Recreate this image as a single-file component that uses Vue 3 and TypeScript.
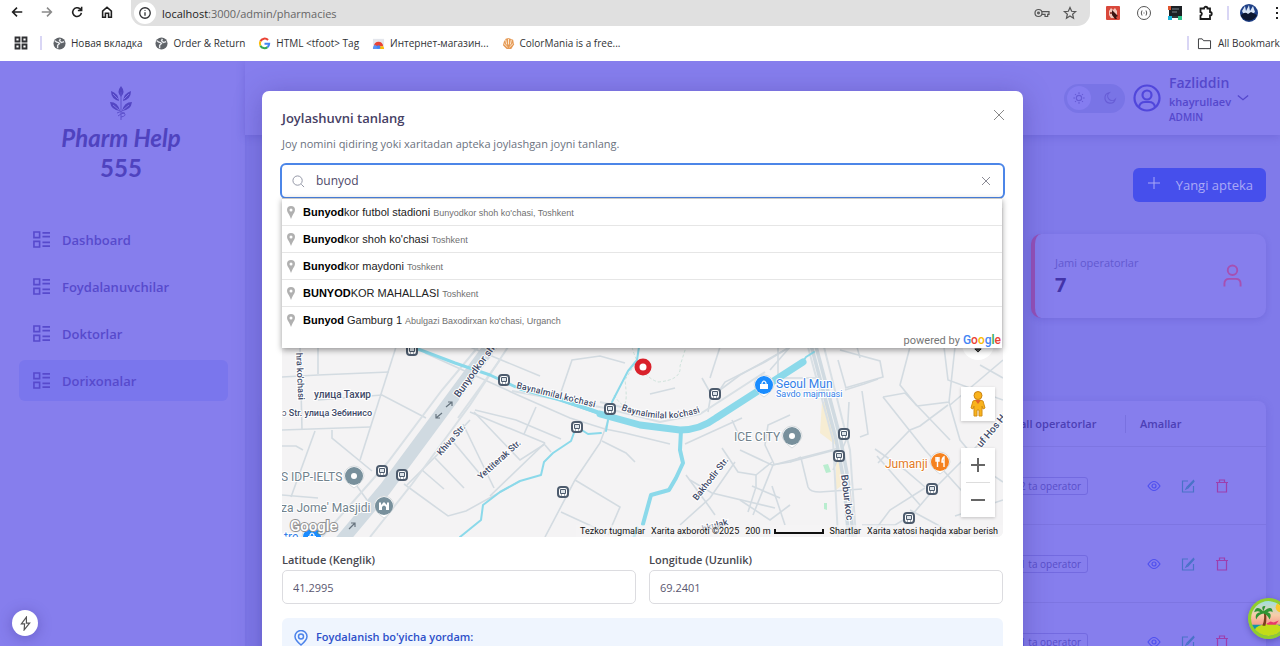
<script setup lang="ts">
import { ref } from 'vue'

interface Bookmark { label: string; icon: 'globe' | 'google' | 'store' | 'mania' }
interface Suggestion { match: string; rest: string; area: string }
interface Poi { x: number; y: number; color: string; kind: 'dot' | 'mosque' | 'bag' | 'food' }

const bookmarks: Bookmark[] = [
  { label: 'Новая вкладка', icon: 'globe' },
  { label: 'Order & Return', icon: 'globe' },
  { label: 'HTML <tfoot> Tag', icon: 'google' },
  { label: 'Интернет-магазин...', icon: 'store' },
  { label: 'ColorMania is a free...', icon: 'mania' },
]
const menu = ['Dashboard', 'Foydalanuvchilar', 'Doktorlar', 'Dorixonalar']
const active = ref('Dorixonalar')
const operators = [2, 1, 1]
const query = ref('bunyod')
const latitude = ref('41.2995')
const longitude = ref('69.2401')

const suggestions: Suggestion[] = [
  { match: 'Bunyod', rest: 'kor futbol stadioni', area: "Bunyodkor shoh ko'chasi, Toshkent" },
  { match: 'Bunyod', rest: "kor shoh ko'chasi", area: 'Toshkent' },
  { match: 'Bunyod', rest: 'kor maydoni', area: 'Toshkent' },
  { match: 'BUNYOD', rest: 'KOR MAHALLASI', area: 'Toshkent' },
  { match: 'Bunyod', rest: ' Gamburg 1', area: "Abulgazi Baxodirxan ko'chasi, Urganch" },
]

const stops: [number, number][] = [
  [412, 350], [504, 380], [382, 471], [402, 475], [577, 427], [610, 409],
  [715, 394], [563, 492], [844, 434], [839, 456], [932, 489], [909, 518],
]
const pois: Poi[] = [
  { x: 354, y: 476, color: '#78909c', kind: 'dot' },
  { x: 384, y: 506, color: '#78909c', kind: 'mosque' },
  { x: 792, y: 436, color: '#78909c', kind: 'dot' },
  { x: 764, y: 385, color: '#1a8cff', kind: 'bag' },
  { x: 312, y: 537, color: '#1a8cff', kind: 'bag' },
  { x: 940, y: 462, color: '#f58220', kind: 'food' },
]
const roads = [
  'M282 377L318 375L389 372', 'M318 347V374', 'M300 347L302 430', 'M282 430L370 427', 'M396 347L360 460',
  'M318 400L382 395L426 418', 'M332 430V438L372 471', 'M315 431L291 497', 'M282 446L296 446L303 450',
  'M282 495L318 498', 'M349 475L367 500', 'M404 484L448 516L466 511L520 481',
  'M407 485L437 455L470 420', 'M422 470L444 489', 'M435 458L464 488', 'M450 438L480 474', 'M463 424L494 488',
  'M470 412L545 443', 'M474 412L520 460L545 444', 'M425 353L520 396L570 418L605 429L625 433L670 444', 'M470 347L540 376',
  'M475 410L516 420L561 439', 'M536 407L524 434', 'M545 443L490 496', 'M608 421L600 443L575 480L545 537',
  'M602 441L626 453L635 462', 'M575 480L620 507L608 535', 'M561 512L600 530', 'M545 445L551 452',
  'M560 395L572 360L600 356L625 363', 'M650 394L675 388', 'M685 444L742 418', 'M732 420L741 440', 'M717 394L725 382L765 362L790 347',
  'M702 378L711 394L708 412', 'M710 378L720 347', 'M790 347L740 375L720 390',
  'M680 525L710 498L735 462', 'M686 475L708 505L715 515', 'M690 480L712 493L775 508', 'M740 450L772 465L790 462L835 450',
  'M722 448L738 472L756 475V487L748 512', 'M773 465L753 515', 'M752 486L780 498', 'M756 475L772 462', 'M740 500L770 520L790 505', 'M772 486L785 525',
  'M774 464L765 445L768 425L790 415', 'M801 458L808 487Q810 492 820 492L862 489', 'M773 465L843 447', 'M790 462L801 457',
  'M778 347V378L818 378', 'M790 347L770 370', 'M840 350L880 361L883 377L845 388', 'M860 358L857 347', 'M846 388L838 360',
  'M849 402L847 438L833 470', 'M845 390L864 384L878 379', 'M862 391L868 434L860 437', 'M883 397L905 393L950 440',
  'M883 397L925 450L970 500', 'M878 463L910 430L920 426L948 405', 'M875 449L905 470L925 487', 'M877 456L920 505',
  'M917 406L949 402L955 347', 'M949 402L960 440L985 470L1003 482', 'M917 406L900 385L910 347', 'M950 405L1003 360', 'M944 347L948 380L1003 400',
  'M862 525H895L912 515L935 488L968 455L1003 420', 'M875 530L890 510L925 488', 'M980 365L1003 378', 'M910 510L960 537', 'M955 516L1003 500',
]
const lanes = [
  'M322 537L388 462L442 390L478 347', 'M370 537L412 484L470 405L508 347', 'M458 418L500 360',
  'M808 347L833 440L838 537', 'M824 347L850 450L856 537', 'M512 391L605 408L660 422L700 414L765 372', 'M600 402L660 416',
]
</script>

<template>
  <div class="window">
    <header class="chrome">
      <div class="toolbar">
        <nav class="nav-buttons" aria-label="Browser">
          <button aria-label="Back"><svg viewBox="0 0 16 16"><path d="M14 8H3M8 3L3 8l5 5" /></svg></button>
          <button aria-label="Forward" class="dim"><svg viewBox="0 0 16 16"><path d="M2 8h11M8 3l5 5-5 5" /></svg></button>
          <button aria-label="Reload"><svg viewBox="0 0 16 16"><path d="M13 9A5 5 0 1 1 11.500 4.500L13 6M13.300 2v4.300H9" /></svg></button>
          <button aria-label="Home"><svg viewBox="0 0 16 16"><path d="M3 7l5-4.500L13 7v7H9.800V9.500H6.200V14H3z" /></svg></button>
        </nav>
        <div class="address">
          <span class="info"><svg viewBox="0 0 16 16"><circle cx="8" cy="8" r="6" /><path d="M8 7.200V11M8 4.800v1" /></svg></span>
          <span class="url"><b>localhost</b>:3000/admin/pharmacies</span>
          <svg class="a-icon" viewBox="0 0 18 16"><circle cx="5" cy="8" r="4" /><circle cx="5" cy="8" r="1" /><path d="M9 6.500h8v3h-1.500V12h-3V9.500H9" /></svg>
          <svg class="a-icon" viewBox="0 0 16 16"><path d="M8 1.800l1.900 4.200 4.500.4-3.400 3 1 4.500L8 11.500l-4 2.400 1-4.500-3.400-3L6.100 6z" /></svg>
        </div>
        <div class="extensions">
          <svg viewBox="0 0 16 16"><rect x="1" y="1" width="14" height="14" rx="1" fill="#d9483b" /><path d="M4 6l2-3 2 2 2-2 2 3v4l-3 3H6l-2-3z" fill="#f2c7bd" /><path d="M7 5l6 6-2 1 1 2-2 0-3-4z" fill="#3a1512" /><circle cx="6" cy="8" r="1" fill="#7b201a" /></svg>
          <svg viewBox="0 0 16 16" class="outlined"><circle cx="8" cy="8" r="6.500" /><path d="M6 5.500q-1.500 2.500 0 5M10 5.500q1.500 2.500 0 5M7.500 8h1" /></svg>
          <svg viewBox="0 0 16 16"><rect x="2" y="1" width="13" height="10" fill="#1c2024" /><path d="M1 1h3v4H1z" fill="#e0552e" /><path d="M1 11h4v4H1z" fill="#19b5dc" /><path d="M11 11h4v4h-4z" fill="#2bc48a" /><path d="M5 4h7M5 7h5" stroke="#7c858c" /><path d="M5 11h6v2H5z" fill="#30363b" /></svg>
          <svg viewBox="0 0 16 16" class="outlined bold"><path d="M2.500 3.500H6a1.700 1.700 0 0 1 3.500 0H12V7a1.700 1.700 0 0 1 0 3.500V14H2.500v-3.500a1.800 1.800 0 0 0 0-3.500z" /></svg>
          <i class="bar"></i>
          <svg class="user" viewBox="0 0 18 18"><circle cx="9" cy="9" r="9" fill="#1e3f86" /><path d="M2 7l3-5 1 5 3-6 1 6 3-5 2 6-4 3H4z" fill="#d7e4f5" /><path d="M1 11q4-4 7-1l3-2 6 3a9 9 0 0 1-16 1z" fill="#0d1730" /></svg>
          <button class="kebab" aria-label="Menu"><svg viewBox="0 0 4 16"><path d="M1 2h2v2H1zM1 7h2v2H1zM1 12h2v2H1z" fill="#222" /></svg></button>
        </div>
      </div>
      <div class="bookmarks">
        <svg class="apps" viewBox="0 0 14 14"><path d="M1.500 1.500h4v4h-4zM8.500 1.500h4v4h-4zM1.500 8.500h4v4h-4zM8.500 8.500h4v4h-4z" /></svg>
        <i class="bar"></i>
        <a v-for="b in bookmarks" :key="b.label" href="#">
          <svg v-if="b.icon === 'globe'" viewBox="0 0 14 14"><circle cx="7" cy="7" r="6.500" fill="#5f6368" /><path d="M2 4q2 2 4 2l1 1-2 2v3M8 2l-1 2 2 2 3-1" stroke="#e8eaed" stroke-width="1.500" /></svg>
          <svg v-else-if="b.icon === 'google'" viewBox="0 0 14 14" stroke-width="2.200"><path d="M10.800 3.300A5 5 0 0 0 2.600 4.600" stroke="#ea4335" /><path d="M2.600 4.600a5 5 0 0 0 0 4.800" stroke="#fbbc05" /><path d="M2.600 9.400a5 5 0 0 0 7.600 1.500" stroke="#34a853" /><path d="M10.200 10.900A5 5 0 0 0 12 7.200H7" stroke="#4285f4" /></svg>
          <svg v-else-if="b.icon === 'store'" viewBox="0 0 14 14"><path d="M1 2h12v11H1z" fill="#e4e6ec" /><path d="M2 10a5 5 0 0 1 10 0H7z" fill="#ea4335" /><path d="M1 13q0-3 2-5l4 3-1 2z" fill="#5b95f5" /><path d="M8 13h5q0-2-1-3H7z" fill="#fbbc05" /><circle cx="7" cy="11" r="2" fill="#4285f4" /></svg>
          <svg v-else viewBox="0 0 14 14"><path d="M2 5l2-3 3-1 5 2 1 5-3 5H5L1 9z" fill="#e59a56" /><path d="M4 3l1 5M7 2v6M10 3L9 8M2 7l4 4M12 7l-4 4" stroke="#fff0dc" /></svg>
          <span>{{ b.label }}</span>
        </a>
        <div class="all"><i class="bar"></i><svg viewBox="0 0 16 14"><path d="M1.500 2h4l1.500 2h7.500v8.500h-13z" /></svg><span>All Bookmarks</span></div>
      </div>
    </header>

    <div class="app">
      <aside class="sidebar">
        <div class="brand">
          <svg viewBox="0 0 26 36"><path d="M13 1q-5 6 0 11q5-5 0-11zM3 6q0 8 8 10Q10 8 3 6zM23 6q0 8-8 10Q16 8 23 6zM2 17q1 8 10 9Q10 17 2 17zM24 17q-1 8-10 9Q16 17 24 17z" /><path class="line" d="M13 7v28M9 28q4-3 7 0t-3 4M17 28q-4 0-7 3" /><path class="vein" d="M5 9l5 5M21 9l-5 5M5 20l6 5M21 20l-6 5" /></svg>
          <p><em>Pharm Help</em><br />555</p>
        </div>
        <nav>
          <a v-for="m in menu" :key="m" href="#" :class="{ active: m === active }" @click.prevent="active = m">
            <svg viewBox="0 0 18 18"><path d="M1 1h6v6H1zM1 11h6v6H1zM10 2h8M10 6h8M10 12h8M10 16h8" /></svg>{{ m }}
          </a>
        </nav>
      </aside>
      <main>
        <div class="topbar">
          <button class="theme" aria-label="Theme">
            <span><svg viewBox="0 0 16 16"><circle cx="8" cy="8" r="3" /><path d="M8 1.500v2M8 12.500v2M1.500 8h2M12.500 8h2M3.500 3.500l1 1M11.500 11.500l1 1M12.500 3.500l-1 1M4.500 11.500l-1 1" /></svg></span>
            <svg viewBox="0 0 16 16"><path d="M7 2a6 6 0 1 0 7 7.500A5 5 0 0 1 7 2z" /></svg>
          </button>
          <svg class="avatar" viewBox="0 0 28 28"><circle cx="14" cy="14" r="12.500" /><circle cx="14" cy="11" r="4.500" /><path d="M6 23q1-5 6-5h4q5 0 6 5" /></svg>
          <div class="who"><strong>Fazliddin</strong><b>khayrullaev</b><small>ADMIN</small></div>
          <svg class="chev" viewBox="0 0 14 8"><path d="M1 1l6 5 6-5" /></svg>
        </div>
        <div class="content">
          <button class="add"><svg viewBox="0 0 12 12"><path d="M6 0v12M0 6h12" /></svg>Yangi apteka</button>
          <section class="stat">
            <div><span>Jami operatorlar</span><strong>7</strong></div>
            <svg viewBox="0 0 20 24"><circle cx="10" cy="6" r="5" /><path d="M1.500 23v-3q0-5 5-5h7q5 0 5 5v3" /></svg>
          </section>
          <table>
            <thead><tr><th></th><th class="ops">Call operatorlar</th><th class="acts">Amallar</th></tr></thead>
            <tbody>
              <tr v-for="(n, i) in operators" :key="i">
                <td></td>
                <td><span class="tag">{{ n }} ta operator</span></td>
                <td>
                  <div class="actions">
                    <button class="view" aria-label="View"><svg viewBox="0 0 14 14"><path d="M1 7q6-9 12 0q-6 9-12 0z" /><circle cx="7" cy="7" r="2" /></svg></button>
                    <button class="edit" aria-label="Edit"><svg viewBox="0 0 14 14"><path d="M7 2H1.500v11h11V7M12.500 1.500L6 8l-1 2 2-1 6-6.500z" /></svg></button>
                    <button class="del" aria-label="Delete"><svg viewBox="0 0 14 14"><path d="M1 3.500h12M4.500 3.500V1h5v2.500M2.500 3.500v9.500h9V3.500" /></svg></button>
                  </div>
                </td>
              </tr>
            </tbody>
          </table>
        </div>
      </main>

      <div class="backdrop">
        <div class="modal" role="dialog" aria-labelledby="dialog-title">
          <button class="close" aria-label="Close"><svg viewBox="0 0 12 12"><path d="M1 1l10 10M11 1L1 11" /></svg></button>
          <h2 id="dialog-title">Joylashuvni tanlang</h2>
          <p class="hint">Joy nomini qidiring yoki xaritadan apteka joylashgan joyni tanlang.</p>
          <div class="search">
            <svg viewBox="0 0 14 14"><circle cx="6" cy="6" r="5" /><path d="M10 10l3 3" /></svg>
            <input v-model="query" type="text" aria-label="Joy nomi" />
            <button aria-label="Clear" @click="query = ''"><svg viewBox="0 0 12 12"><path d="M2 2l8 8M10 2l-8 8" /></svg></button>
            <div class="results">
              <ul>
                <li v-for="s in suggestions" :key="s.rest">
                  <svg viewBox="0 0 8 13"><path d="M4 0a4 4 0 0 1 4 4Q8 6 6 8.500Q5 10 4 13Q3 10 2 8.500Q0 6 0 4a4 4 0 0 1 4-4z" /><circle cx="4" cy="4" r="1.500" /></svg>
                  <span class="place"><b>{{ s.match }}</b>{{ s.rest }}</span> <span class="area">{{ s.area }}</span>
                </li>
              </ul>
              <div class="powered">powered by <span class="google"><i class="b">G</i><i class="r">o</i><i class="y">o</i><i class="b">g</i><i class="g">l</i><i class="r">e</i></span></div>
            </div>
          </div>

          <div class="map">
            <svg class="canvas" viewBox="282 208 721 329" preserveAspectRatio="xMidYMax slice" role="img" aria-label="Xarita">
              <defs>
                <path id="street-a" d="M516 388L597 408" />
                <path id="street-b" d="M621 410Q668 427 708 409" />
              </defs>
              <rect x="0" y="0" width="1400" height="540" fill="#f4f3f4" />
              <path d="M822 402l10 0 8 30 6 50-10 8V445l-16-12z" fill="#f7edd3" />
              <path d="M823 465l5-1 3 8-5 1zM824 503l3 0 0 7-3-1z" fill="#b9edcf" />
              <g class="roads"><path v-for="d in roads" :key="d" :d="d" /></g>
              <g class="paths"><path d="M632 347Q640 376 658 382Q682 380 680 366L686 347M614 395Q630 420 625 380L636 362" /></g>
              <g class="lanes"><path v-for="d in lanes" :key="d" :d="d" /></g>
              <path class="avenue" d="M338 545L385 489L442 412L495 340" />
              <path class="avenue mid" d="M812 340L838 438L846 480L851 540" />
              <path class="road-gap" d="M812 340L838 438L846 480L851 540" />
              <g class="water">
                <path d="M410 346L455 363L490 375L520 389L560 400L605 415" stroke-width="3" />
                <path d="M560 399L605 415" stroke-width="4" />
                <path d="M600 414L640 425L680 430Q700 430 716 418L772 382L803 362" stroke-width="7" />
                <path d="M802 363L806 357L814 352" stroke-width="2" />
                <path d="M639 347L637 360L628 371L612 402" stroke-width="2" />
                <path d="M577 427L588 434L601 433M608 420L606 431" stroke-width="2" />
                <path d="M575 430L571 441L553 453L544 462L541 475L520 481L500 492L483 505L481 520L460 537" stroke-width="2" />
                <path d="M681 430L680 450L683 463L676 478L669 490L651 495L643 524" stroke-width="4" />
                <path d="M637 528L634 537" stroke-width="3" />
              </g>
              <g class="arrows"><path d="M436 418l6-5m-6 1v4h4M446 407l6-5m-4 0h4v4M349 529l6-6m-4 0h4v4" /></g>
              <g class="labels">
                <text transform="translate(296 353) rotate(87)">hra ko'chasi</text>
                <text class="wide" x="314" y="398">улица Тахир</text>
                <text x="282" y="416">ɔ Str. улица Зебинисо</text>
                <text class="wide" transform="translate(459 398) rotate(-54)">Bunyodkor shoh</text>
                <text transform="translate(441 456) rotate(-49)">Khiva Str.</text>
                <text transform="translate(481 480) rotate(-42)">Yettiterak Str.</text>
                <text><textPath href="#street-a">Baynalmilal ko'chasi</textPath></text>
                <text><textPath href="#street-b">Baynalmilal ko'chasi</textPath></text>
                <text transform="translate(697 501) rotate(-52)">Bakhodir Str.</text>
                <text transform="translate(703 532) rotate(-16)">hkulak</text>
                <text class="wide" transform="translate(841 475) rotate(83)">Bobur ko'c</text>
                <text class="wide" transform="translate(981 448) rotate(-50)">uf Hos Hojib</text>
              </g>
              <g v-for="(s, i) in stops" :key="i" :transform="`translate(${s[0]} ${s[1]})`">
                <rect x="-5" y="-5" width="10" height="10" rx="3" fill="#fff" stroke="#4d5b6d" stroke-width="2" />
                <path d="M-2.500-2.500h5v4h-5zM-2 3h1M1 3h1" fill="#dfe5ea" stroke="#4d5b6d" />
              </g>
              <g v-for="(p, i) in pois" :key="'p' + i" :transform="`translate(${p.x} ${p.y})`">
                <path d="M-10 0a10 10 0 1 1 20 0Q9 6 0 12Q-9 6-10 0z" fill="#fff" stroke="#d8dcdf" />
                <circle r="9" :fill="p.color" />
                <circle v-if="p.kind === 'dot'" r="3" fill="#fff" />
                <path v-else-if="p.kind === 'mosque'" d="M-5 4v-7l1-1 1 1v2l3-3 3 3v-2l1-1 1 1v7H2V1q-2-3-4 0v3z" fill="#fff" />
                <g v-else-if="p.kind === 'bag'"><path d="M-4-1h8v5h-8z" fill="#fff" /><path d="M-2-1v-1q2-4 4 0v1" stroke="#fff" stroke-width="1.200" fill="none" /></g>
                <path v-else d="M-4-5v4h3v-4M-2.500-5v10M4 5v-10q-2 1-2 5h2" stroke="#fff" stroke-width="1.400" fill="none" />
              </g>
              <g class="places">
                <text x="281" y="481">S IDP-IELTS</text>
                <text x="281" y="512">za Jome' Masjidi</text>
                <text x="734" y="441">ICE CITY</text>
                <text class="blue" x="776" y="388">Seoul Mun</text>
                <text class="blue small" x="776" y="397">Savdo majmuasi</text>
                <text class="blue" x="284" y="541">tre</text>
                <text class="orange" x="885" y="468">Jumanji</text>
              </g>
              <circle cx="643" cy="367" r="6" fill="#fff" stroke="#d9212b" stroke-width="5" />
              <g class="watermark"><text x="290" y="531">Google</text></g>
            </svg>
            <button class="compass" aria-label="Compass"><svg viewBox="0 0 10 6"><path d="M1 1l4 4 4-4z" /></svg></button>
            <div class="controls">
              <button class="pegman" aria-label="Street View"><svg viewBox="0 0 16 26"><circle cx="8" cy="4.500" r="4" fill="#f9b31c" stroke="#c98213" /><path d="M3 10q5-3 10 0l2 7-2 1-1-3v10H9v-6H7v6H4V15l-1 3-2-1z" fill="#f9b31c" stroke="#d28e18" /><path d="M5 9l3 4 3-4z" fill="#e2632a" stroke="none" /></svg></button>
              <div class="zoom"><button aria-label="Zoom in"><svg viewBox="0 0 14 14"><path d="M0 7h14M7 0v14" /></svg></button><i></i><button aria-label="Zoom out"><svg viewBox="0 0 14 14"><path d="M0 7h14" /></svg></button></div>
            </div>
            <div class="legal"><span>Tezkor tugmalar</span><span>Xarita axboroti ©2025</span><span class="scale">200 m<i></i></span><a href="#">Shartlar</a><a href="#">Xarita xatosi haqida xabar berish</a></div>
          </div>

          <div class="fields">
            <label>Latitude (Kenglik)<input v-model="latitude" type="text" /></label>
            <label>Longitude (Uzunlik)<input v-model="longitude" type="text" /></label>
          </div>
          <div class="help">
            <svg viewBox="0 0 14 16"><path d="M7 15Q1 10 1 6.500a6 6 0 0 1 12 0Q13 10 7 15z" /><circle cx="7" cy="6.500" r="2.500" /></svg>
            <strong>Foydalanish bo'yicha yordam:</strong>
          </div>
        </div>
      </div>

      <button class="bolt" aria-label="Tools"><svg viewBox="0 0 12 16"><path d="M7 1L1.500 8.500H5L4.500 15L10.500 7.500H7z" /></svg></button>
      <div class="island">
        <svg viewBox="0 0 40 40">
          <defs><linearGradient id="sky" x1="0" y1="0" x2="0" y2="1"><stop offset="0" stop-color="#9fe0dc" /><stop offset="0.400" stop-color="#f8cda8" /><stop offset="0.750" stop-color="#f58f86" /></linearGradient><clipPath id="disc"><circle cx="20" cy="20" r="17" /></clipPath></defs>
          <circle cx="20" cy="20" r="20" fill="#8fce2c" /><circle cx="20" cy="20" r="17" fill="url(#sky)" />
          <g clip-path="url(#disc)"><circle cx="32" cy="9" r="5" fill="#fbc62a" /><path d="M0 26h40v14H0z" fill="#1493a8" /><ellipse cx="21" cy="33" rx="15" ry="8" fill="#c3dc18" /></g>
          <path d="M14 27q3-7 1-14l2 0q2 7 0 14z" fill="#7c3f1d" />
          <path d="M15 13Q8 6 6 14q4-2 6 0q-6 1-4 7q2-5 7-6q4 1 6 6q3-6-2-7q3-2 5 0Q24 6 15 13zM15 13q-3-6 2-5z" fill="#2e9433" />
          <path d="M18 25l4-2 3 1 5-2-3 4h-8z" fill="#e8386a" />
        </svg>
      </div>
    </div>
  </div>
</template>

<style>
html, body { margin: 0; overflow: hidden; }
</style>

<style scoped>
* { box-sizing: border-box; }
.window { display: flex; flex-direction: column; height: 100vh; font-family: "Open Sans", "Noto Sans", sans-serif; font-size: 12px; overflow: hidden; }
button { border: 0; padding: 0; background: none; font: inherit; color: inherit; cursor: pointer; }
a { color: inherit; text-decoration: none; }
svg { flex: none; fill: none; stroke: currentColor; }
p, h2, ul { margin: 0; padding: 0; }

.chrome { flex: none; background: #fff; color: #303134; }
.toolbar { display: flex; align-items: center; height: 26px; }
.nav-buttons { display: flex; gap: 16px; padding-left: 10px; width: 131px; flex: none; }
.nav-buttons button { width: 14px; height: 26px; display: flex; align-items: center; color: #1f1f1f; }
.nav-buttons button.dim { color: #8a8a8a; }
.nav-buttons svg { width: 14px; height: 14px; stroke-width: 1.800; margin-bottom: 2px; }
.address { flex: 1; display: flex; align-items: center; height: 26px; padding: 0 12px 0 3px; border-radius: 0 0 13px 13px; background: #e0e0e0; }
.info { width: 22px; height: 22px; border-radius: 11px; background: #fff; display: grid; place-items: center; }
.info svg { width: 14px; height: 14px; stroke-width: 1.500; }
.url { flex: 1; margin-left: 6px; font-size: 11px; color: #666; }
.url b { font-weight: 400; color: #222; }
.a-icon { width: 16px; height: 14px; margin-left: 12px; stroke: #555; stroke-width: 1.400; }
.extensions { flex: none; display: flex; align-items: center; gap: 15px; width: 190px; padding-left: 15px; overflow: hidden; }
.extensions svg { width: 16px; height: 16px; stroke: none; }
.extensions .outlined { stroke: #555; }
.extensions .bold { stroke: #1c1c1c; stroke-width: 1.800; }
.extensions .user { width: 18px; height: 18px; margin-left: -4px; }
.bar { flex: none; width: 2px; height: 14px; background: #d9d6f5; }
.extensions .bar { margin-left: -2px; }
.kebab { flex: none; width: 4px; height: 16px; margin-left: 2px; }
.extensions .kebab svg { display: block; width: 4px; height: 16px; }
.bookmarks { display: flex; align-items: center; height: 34px; padding-left: 14px; font-size: 10px; white-space: nowrap; }
.apps { width: 14px; height: 14px; stroke-width: 1.800; margin-right: 12px; }
.bookmarks .bar { margin-right: 11px; }
.bookmarks a { display: flex; align-items: center; gap: 5px; margin-right: 13px; }
.bookmarks a svg { width: 13px; height: 13px; }
.bookmarks a circle, .bookmarks a path:not([stroke]) { stroke: none; }
.bookmarks .all { margin-left: auto; display: flex; align-items: center; gap: 6px; width: 93px; overflow: hidden; }
.bookmarks .all .bar { margin-right: 6px; }
.all svg { width: 15px; height: 13px; }

.app { position: relative; flex: 1; display: flex; overflow: hidden; background: #807aea; margin-top: 1px; min-height: 0; }
.sidebar { width: 245px; flex: none; padding: 24px 17px 0 19px; background: #867eed; color: #574acc; box-shadow: 0 0 8px rgba(80, 72, 200, 0.15); }
.brand { display: flex; flex-direction: column; align-items: center; padding-right: 5px; color: #4f43bf; }
.brand svg { width: 26px; height: 36px; fill: #5346c4; stroke: none; }
.brand .line { stroke: #5e52cd; fill: none; }
.brand .vein { stroke: #7d73e4; fill: none; }
.brand p { margin-top: 2px; font: 700 24px/30px Lato, sans-serif; text-align: center; }
.sidebar nav { display: flex; flex-direction: column; gap: 6px; margin-top: 36px; }
.sidebar nav a { display: flex; align-items: center; gap: 12px; height: 41px; padding-left: 14px; border-radius: 6px; font-size: 13px; font-weight: 600; }
.sidebar nav a.active { background: #7a76ed; }
.sidebar nav svg { width: 17px; height: 17px; stroke-width: 1.700; }
main { flex: 1; min-width: 0; }
.topbar { display: flex; justify-content: flex-end; align-items: center; height: 74px; padding-right: 31px; background: #867eed; box-shadow: 0 2px 8px rgba(70, 60, 180, 0.25); color: #5548cc; }
.theme { display: flex; align-items: center; gap: 12px; width: 61px; height: 29px; padding: 0 5px 0 3px; border-radius: 15px; background: #7974e6; }
.theme span { width: 24px; height: 24px; border-radius: 12px; background: #857df0; display: grid; place-items: center; }
.theme svg { width: 14px; height: 14px; stroke: #675dd6; stroke-width: 1.300; }
.avatar { width: 28px; height: 28px; margin: 0 8px; stroke: #5147db; stroke-width: 2.200; }
.who { display: flex; flex-direction: column; width: 62px; }
.who strong { font-size: 14px; line-height: 20px; font-weight: 600; }
.who b { font-size: 11px; line-height: 18px; font-weight: 600; }
.who small { font-size: 10px; line-height: 12px; font-weight: 600; }
.chev { width: 12px; height: 8px; margin-left: 6px; stroke-width: 1.500; }
.content { display: flex; flex-direction: column; align-items: flex-end; padding: 33px 14px 0 20px; }
.add { display: flex; align-items: center; gap: 16px; height: 34px; padding: 0 13px 0 15px; border-radius: 6px; background: #464fec; color: #aaa9f7; font-size: 13px; }
.add svg { width: 12px; height: 12px; margin-bottom: 4px; }
.stat { display: flex; align-items: center; justify-content: space-between; width: 235px; height: 84px; margin-top: 32px; padding: 0 24px 0 20px; border-left: 4px solid #9652b8; border-radius: 10px; background: #867eed; box-shadow: 0 2px 6px rgba(70, 60, 180, 0.2); }
.stat span { display: block; color: #6259d0; font-size: 11px; line-height: 18px; }
.stat strong { display: block; font-size: 20px; line-height: 26px; color: #4334a9; }
.stat svg { width: 19px; height: 24px; stroke: #a650b2; stroke-width: 2; }
table { width: 100%; margin-top: 83px; border-collapse: separate; border-spacing: 0; background: #867eed; border-radius: 8px; box-shadow: 0 2px 8px rgba(70, 60, 180, 0.2); }
th { height: 46px; padding: 0 0 0 14px; text-align: left; font-size: 11px; font-weight: 600; color: #4c40b5; border-bottom: 1px solid #7d75e2; white-space: nowrap; }
td { height: 78px; padding: 0 0 0 14px; border-bottom: 1px solid #7d75e2; }
.ops { width: 127px; background: linear-gradient(#7971e0, #7971e0) right center / 1px 18px no-repeat; }
.acts { width: 140px; }
.tag { display: inline-block; padding: 0 6px; border: 1px solid #736ae0; border-radius: 3px; font-size: 10px; line-height: 16px; color: #594ec9; white-space: nowrap; }
.actions { display: flex; gap: 20px; padding-left: 7px; }
.actions svg { display: block; width: 14px; height: 14px; stroke-width: 1.200; }
.view { color: #4f50ef; } .edit { color: #4a72c8; } .del { color: #9c3fae; }

.backdrop { position: absolute; inset: 0; display: flex; justify-content: center; align-items: flex-start; padding: 30px 0 0 5px; }
.modal { position: relative; width: 761px; max-width: 100%; min-height: 640px; padding: 17px 20px; border-radius: 7px; background: #fff; box-shadow: 0 4px 28px rgba(50, 40, 130, 0.35); }
.close { position: absolute; right: 16px; top: 17px; width: 14px; height: 14px; }
.close svg { display: block; width: 12px; height: 12px; stroke: #888; }
h2 { font-size: 13px; line-height: 20px; font-weight: 600; color: #464064; }
.hint { margin-top: 6px; line-height: 20px; color: #6b7280; font-size: 11px; }
.search { position: relative; display: flex; align-items: center; height: 36px; margin: 9px -2px 0; padding: 0 11px 0 10px; border: 2px solid #4c86e8; border-radius: 6px; }
.search > svg { width: 13px; height: 13px; stroke: #8b90a0; }
.search input { flex: 1; margin-left: 11px; border: 0; outline: 0; padding: 0; font: inherit; line-height: 20px; color: #4e4968; background: none; }
.search > button svg { display: block; width: 12px; height: 12px; stroke: #8b8b95; }
.results { position: absolute; z-index: 2; left: 0; right: 1px; top: 33px; padding-bottom: 1px; background: #fff; box-shadow: 0 2px 6px rgba(0, 0, 0, 0.4); border-top: 1px solid #c9c9c9; font: 9px "Liberation Sans", sans-serif; }
.results ul { list-style: none; }
.results li { display: flex; align-items: baseline; height: 27px; padding: 0 5px; border-bottom: 1px solid #e6e6e6; line-height: 27px; color: #707070; white-space: nowrap; }
.results li:last-child { border: 0; height: 26px; }
.results li svg { align-self: center; width: 8px; height: 13px; fill: #b0b0b0; stroke: none; margin-right: 8px; }
.results li circle { fill: #fff; }
.place { font-size: 11px; color: #222; white-space: pre; margin-right: 3px; }
.place b { color: #000; }
.powered { display: flex; justify-content: flex-end; align-items: baseline; gap: 3px; height: 14px; padding-right: 1px; font: 11px/14px Roboto, sans-serif; color: #757575; }
.google i { font-style: normal; font-weight: 500; font-size: 12px; }
.b { color: #4285f4; } .r { color: #ea4335; } .y { color: #fbbc05; } .g { color: #34a853; }

.map { position: relative; height: 329px; margin-top: 9px; overflow: hidden; border-radius: 0 0 6px 6px; background: #f4f3f4; font-family: Roboto, sans-serif; }
.canvas { display: block; width: 100%; height: 100%; stroke: none; }
.roads, .paths, .lanes, .avenue, .road-gap, .water, .arrows { fill: none; }
.roads { stroke: #d3dbe1; stroke-width: 1.600; }
.paths { stroke: #cfe3dc; stroke-dasharray: 3 2; }
.lanes { stroke: #d9e0e5; stroke-width: 2; }
.avenue { stroke: #d0dae1; stroke-width: 13; }
.avenue.mid { stroke-width: 8; }
.road-gap { stroke: #f0f2f3; stroke-width: 1; }
.water { stroke: #8bd9ea; stroke-linejoin: round; stroke-linecap: round; }
.arrows { stroke: #66737e; stroke-width: 1.200; }
.labels text { font-size: 9px; font-weight: 500; fill: #3f4b69; stroke: #fff; stroke-width: 2; paint-order: stroke; }
.labels .wide { font-size: 10px; }
.places text { font-size: 12px; fill: #71828d; stroke: #fff; stroke-width: 2; paint-order: stroke; }
.places .blue { fill: #347fe8; }
.places .small { font-size: 9px; }
.places .orange { fill: #e37a24; }
.watermark text { font-size: 15px; font-weight: 500; fill: #fff; stroke: #929292; stroke-width: 2; paint-order: stroke; }
.compass { position: absolute; right: 9px; top: 120px; width: 32px; height: 32px; border-radius: 16px; background: #fff; display: flex; justify-content: center; align-items: flex-end; padding-bottom: 7px; }
.compass svg { width: 8px; height: 5px; fill: #555; }
.controls { position: absolute; right: 8px; bottom: 20px; width: 34px; display: flex; flex-direction: column; gap: 27px; }
.controls svg { display: block; }
.pegman, .zoom { display: grid; place-items: center; background: #fff; box-shadow: 0 1px 3px rgba(0, 0, 0, 0.2); }
.pegman { height: 34px; }
.pegman svg { width: 16px; height: 26px; }
.zoom button { width: 34px; height: 34px; display: grid; place-items: center; }
.zoom svg { width: 14px; height: 14px; stroke: #666; stroke-width: 2; }
.zoom i { width: 24px; height: 1px; background: #ddd; }
.legal { position: absolute; right: 0; bottom: 0; display: flex; gap: 6px; height: 12px; padding: 0 5px 0 4px; font-size: 9px; line-height: 12px; color: #111; background: rgba(245, 245, 245, 0.6); white-space: nowrap; }
.scale { display: flex; align-items: center; gap: 3px; }
.scale i { width: 50px; height: 5px; border: 2px solid #111; border-top: 0; }

.fields { display: flex; gap: 13px; margin-top: 13px; }
.fields label { flex: 1; font-size: 11px; font-weight: 600; line-height: 20px; color: #47474f; }
.fields input { display: block; width: 100%; height: 34px; padding: 0 10px; border: 1px solid #dcdce0; border-radius: 5px; font: inherit; font-size: 11px; font-weight: 400; color: #5a5770; }
.help { display: flex; align-items: flex-start; gap: 8px; height: 90px; margin-top: 14px; padding: 9px 12px; border-radius: 6px; background: #eff5fe; color: #2d4fc9; line-height: 20px; }
.help strong { font-size: 11px; font-weight: 600; }
.help svg { width: 14px; height: 16px; margin-top: 3px; stroke: #4c83ea; stroke-width: 1.500; }

.bolt { position: absolute; left: 12px; bottom: 10px; width: 26px; height: 26px; border-radius: 13px; background: #fff; color: #555; display: grid; place-items: center; box-shadow: 0 2px 14px rgba(60, 50, 140, 0.4); }
.bolt svg { width: 11px; height: 15px; stroke-width: 1.300; }
.island { position: absolute; right: -9px; bottom: 7px; width: 41px; height: 41px; border-radius: 21px; box-shadow: 0 2px 6px rgba(40, 30, 110, 0.4); }
.island svg { display: block; width: 41px; height: 41px; stroke: none; }
.bookmarks .all .bar { margin-right: 2px; }
</style>
